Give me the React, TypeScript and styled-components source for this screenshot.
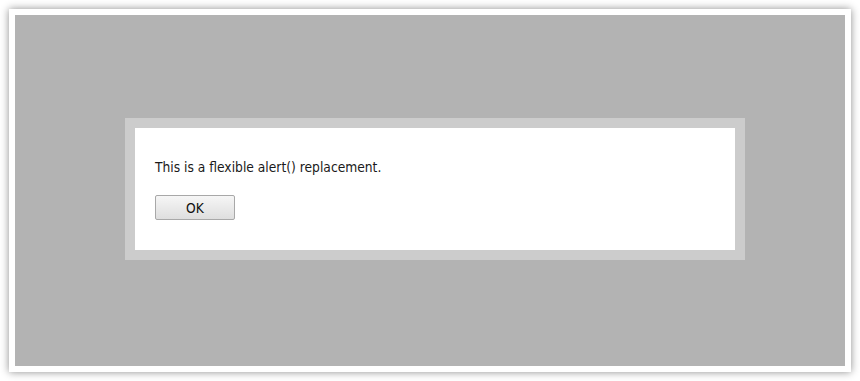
import React from "react";
import styled, { createGlobalStyle } from "styled-components";

const Global = createGlobalStyle`
  html, body { margin: 0; padding: 0; background: #ffffff; }
  body { width: 860px; height: 381px; overflow: hidden; }
`;

const Page = styled.div`
  box-sizing: border-box;
  width: 860px;
  height: 381px;
  padding: 9px;
`;

const Frame = styled.div`
  box-sizing: border-box;
  width: 842px;
  height: 363px;
  border: 6px solid #ffffff;
  box-shadow: 0 0 8px rgba(0, 0, 0, 0.45);
`;

const Overlay = styled.div`
  box-sizing: border-box;
  width: 100%;
  height: 100%;
  background: #b3b3b3;
  padding: 103px 0 0 110px;
`;

const Dialog = styled.div`
  box-sizing: border-box;
  width: 620px;
  height: 142px;
  border: 10px solid #cccccc;
  background: #ffffff;
  padding: 31px 20px 0 20px;
  font-family: "DejaVu Sans Condensed", "DejaVu Sans", sans-serif;
  font-size: 13.7px;
  color: #1a1a1a;
`;

const Message = styled.p`
  margin: 0;
  line-height: 17px;
`;

const Button = styled.button`
  box-sizing: border-box;
  margin-top: 19px;
  width: 80px;
  height: 25px;
  border: 1px solid #a8a8a8;
  border-radius: 2px;
  background: linear-gradient(#f6f6f6, #dedede);
  font-family: inherit;
  font-size: 13.7px;
  color: #111111;
  padding: 0;
  display: block;
`;

export default function App() {
  return (
    <>
      <Global />
      <Page>
        <Frame>
          <Overlay>
            <Dialog>
              <Message>This is a flexible alert() replacement.</Message>
              <Button>OK</Button>
            </Dialog>
          </Overlay>
        </Frame>
      </Page>
    </>
  );
}
